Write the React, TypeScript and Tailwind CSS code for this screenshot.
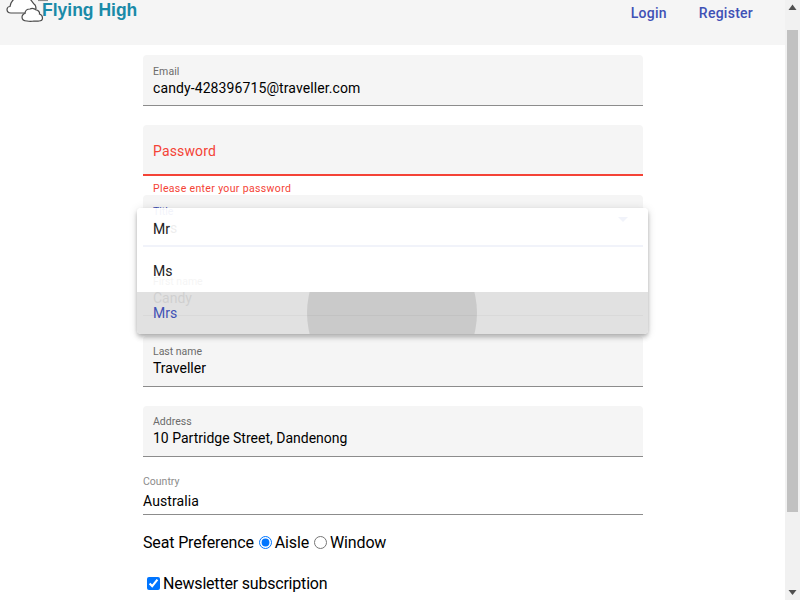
import React from 'react';

const Field = ({ label, value, className = 'pt-[10px]' }: { label: string; value: string; className?: string }) => (
    <div className={`h-[51px] bg-[#f5f5f5] rounded-t border-b border-[#8c8c8c] px-[10px] ${className}`}>
        <div className="text-[10.5px] leading-[13px] text-[#6b6b6b]">{label}</div>
        <div className="text-sm leading-[20px] text-black">{value}</div>
    </div>
);

const Logo = () => (
    <div className="relative w-[150px] h-[30px] overflow-hidden">
        <svg className="absolute left-0 top-0 w-[50px] h-[24px]" viewBox="0 0 50 24" fill="#ffffff" stroke="#4a4a4a" strokeWidth="1.2">
            <path stroke="#8a8a8a" d="M38 0.5h10" />
            <path d="M21 13H11C8 13 7 11 7 9.5 7 7.5 9 6.5 10 6.5 10 3.5 12 1 14-1h16c2 2 3 4 4 5 2 1 2 3 2 5l-6 4z" />
            <path d="M27 21c-3 0-5-1.500-5-4 0-2 2-3.500 3-3.500 0-2.500 2-4.500 5-4.500 2-1 5-.5 6 1 2 0 4 2 3.500 4 1.500.5 3 2 3 4s-1.500 3-3.500 3c-2 .5-4 0-5 0-2 .5-5 .5-7 0z" />
        </svg>
        <span className="absolute left-[42px] top-0 font-['Liberation_Sans',sans-serif] font-bold text-[17.5px] leading-[20px] text-[#1a8aa8]">Flying High</span>
    </div>
);

const Scrollbar = () => (
    <div className="w-[15px] h-full shrink-0 bg-[#f1f1f1] flex flex-col items-center">
        <svg className="w-[15px] h-[15px] shrink-0" viewBox="0 0 15 15" fill="#505050"><path d="M7.5 4.5 11.5 10h-8z" /></svg>
        <div className="w-[11px] h-[482px] mt-[15px] bg-[#c1c1c1]" />
        <div className="flex-1" />
        <svg className="w-[15px] h-[15px] shrink-0" viewBox="0 0 15 15" fill="#505050"><path d="M3.5 5h8l-4 5z" /></svg>
    </div>
);

export default function App() {
    return (
        <div className="w-[800px] h-[600px] overflow-hidden flex bg-white font-['Roboto',sans-serif]">
            <div className="relative flex-1 min-w-0 h-full overflow-hidden">
                <header className="h-[45px] bg-[#f5f5f5] flex justify-between pr-4 overflow-hidden">
                    <Logo />
                    <nav className="flex text-sm font-medium tracking-[0.25px] text-[#3f51b5] pt-[3px]">
                        <a className="px-4 leading-[20px]">Login</a>
                        <a className="px-4 leading-[20px]">Register</a>
                    </nav>
                </header>

                <form className="w-[500px] ml-[143px] pt-[10px]">
                    <div className="mb-[19px] tracking-[0.1px]">
                        <Field label="Email" value="candy-428396715@traveller.com" />
                    </div>

                    <div className="h-[51px] bg-[#f5f5f5] rounded-t border-b-2 border-[#f44336] px-[10px] pt-[16px] text-sm tracking-[0.15px] leading-[20px] text-[#f44336]">Password</div>
                    <div className="h-[19px] px-[10px] pt-[6px] text-[10.5px] tracking-[0.35px] leading-[13px] text-[#f44336]">Please enter your password</div>

                    <div className="h-[52px] bg-[#f5f5f5] rounded-t border-b-2 border-[#3f51b5] px-[10px] pt-[10px] mb-[18px] flex justify-between">
                        <div>
                            <div className="text-[10.5px] leading-[13px] text-[#3f51b5]">Title</div>
                            <div className="text-sm leading-[20px] text-black">Mrs</div>
                        </div>
                        <div className="w-0 h-0 mt-[12px] mr-[5px] border-x-[5px] border-x-transparent border-t-[5px] border-t-[#3f51b5]" />
                    </div>

                    <div className="mb-[20px]"><Field label="First name" value="Candy" /></div>
                    <div className="mb-[19px]"><Field label="Last name" value="Traveller" className="pt-[9px]" /></div>
                    <div className="mb-[15px]"><Field label="Address" value="10 Partridge Street, Dandenong" className="pt-[9px]" /></div>

                    <div className="h-[43px] border-b border-[#8c8c8c] pt-[3px]">
                        <div className="text-[10.5px] leading-[13px] text-[#8c8c8c]">Country</div>
                        <div className="text-sm tracking-[0.1px] leading-[20px] mt-[3px] text-black">Australia</div>
                    </div>

                    <div className="flex items-center mt-[18px] h-[20px] text-base tracking-[-0.15px] leading-[20px] text-black">
                        <span>Seat Preference</span>
                        <input type="radio" name="seat" defaultChecked className="ml-[5px] mr-[3px] -mt-[2px] w-[13px] h-[13px]" />
                        <span>Aisle</span>
                        <input type="radio" name="seat" className="ml-[5px] mr-[3px] -mt-[2px] w-[13px] h-[13px]" />
                        <span>Window</span>
                    </div>

                    <div className="flex items-center mt-[21px] ml-[4px] h-[20px] text-base tracking-[-0.2px] leading-[20px] text-black">
                        <input type="checkbox" defaultChecked className="mr-[3px] -mt-[2px] w-[13px] h-[13px]" />
                        <span>Newsletter subscription</span>
                    </div>
                </form>

                {/* Select panel, caught mid fade-in: backgrounds are see-through, labels are not */}
                <div className="absolute left-[137px] top-[208px] w-[511px] h-[126px] rounded overflow-hidden shadow-[0_2px_4px_-1px_rgba(0,0,0,0.2),0_4px_5px_0_rgba(0,0,0,0.14),0_1px_10px_0_rgba(0,0,0,0.12)] text-sm">
                    <div className="h-[42px] px-4 leading-[42px] bg-white/[0.93] text-[#212121]">Mr</div>
                    <div className="h-[42px] px-4 leading-[42px] bg-white/[0.93] text-[#212121]">Ms</div>
                    <div className="relative h-[42px] px-4 leading-[42px] bg-[#dfdfdf]/[0.93] text-[#3f51b5] overflow-hidden">
                        <div className="absolute left-[170px] top-[-64px] w-[170px] h-[170px] rounded-full bg-black/10" />
                        <span className="relative">Mrs</span>
                    </div>
                </div>
            </div>
            <Scrollbar />
        </div>
    );
}
